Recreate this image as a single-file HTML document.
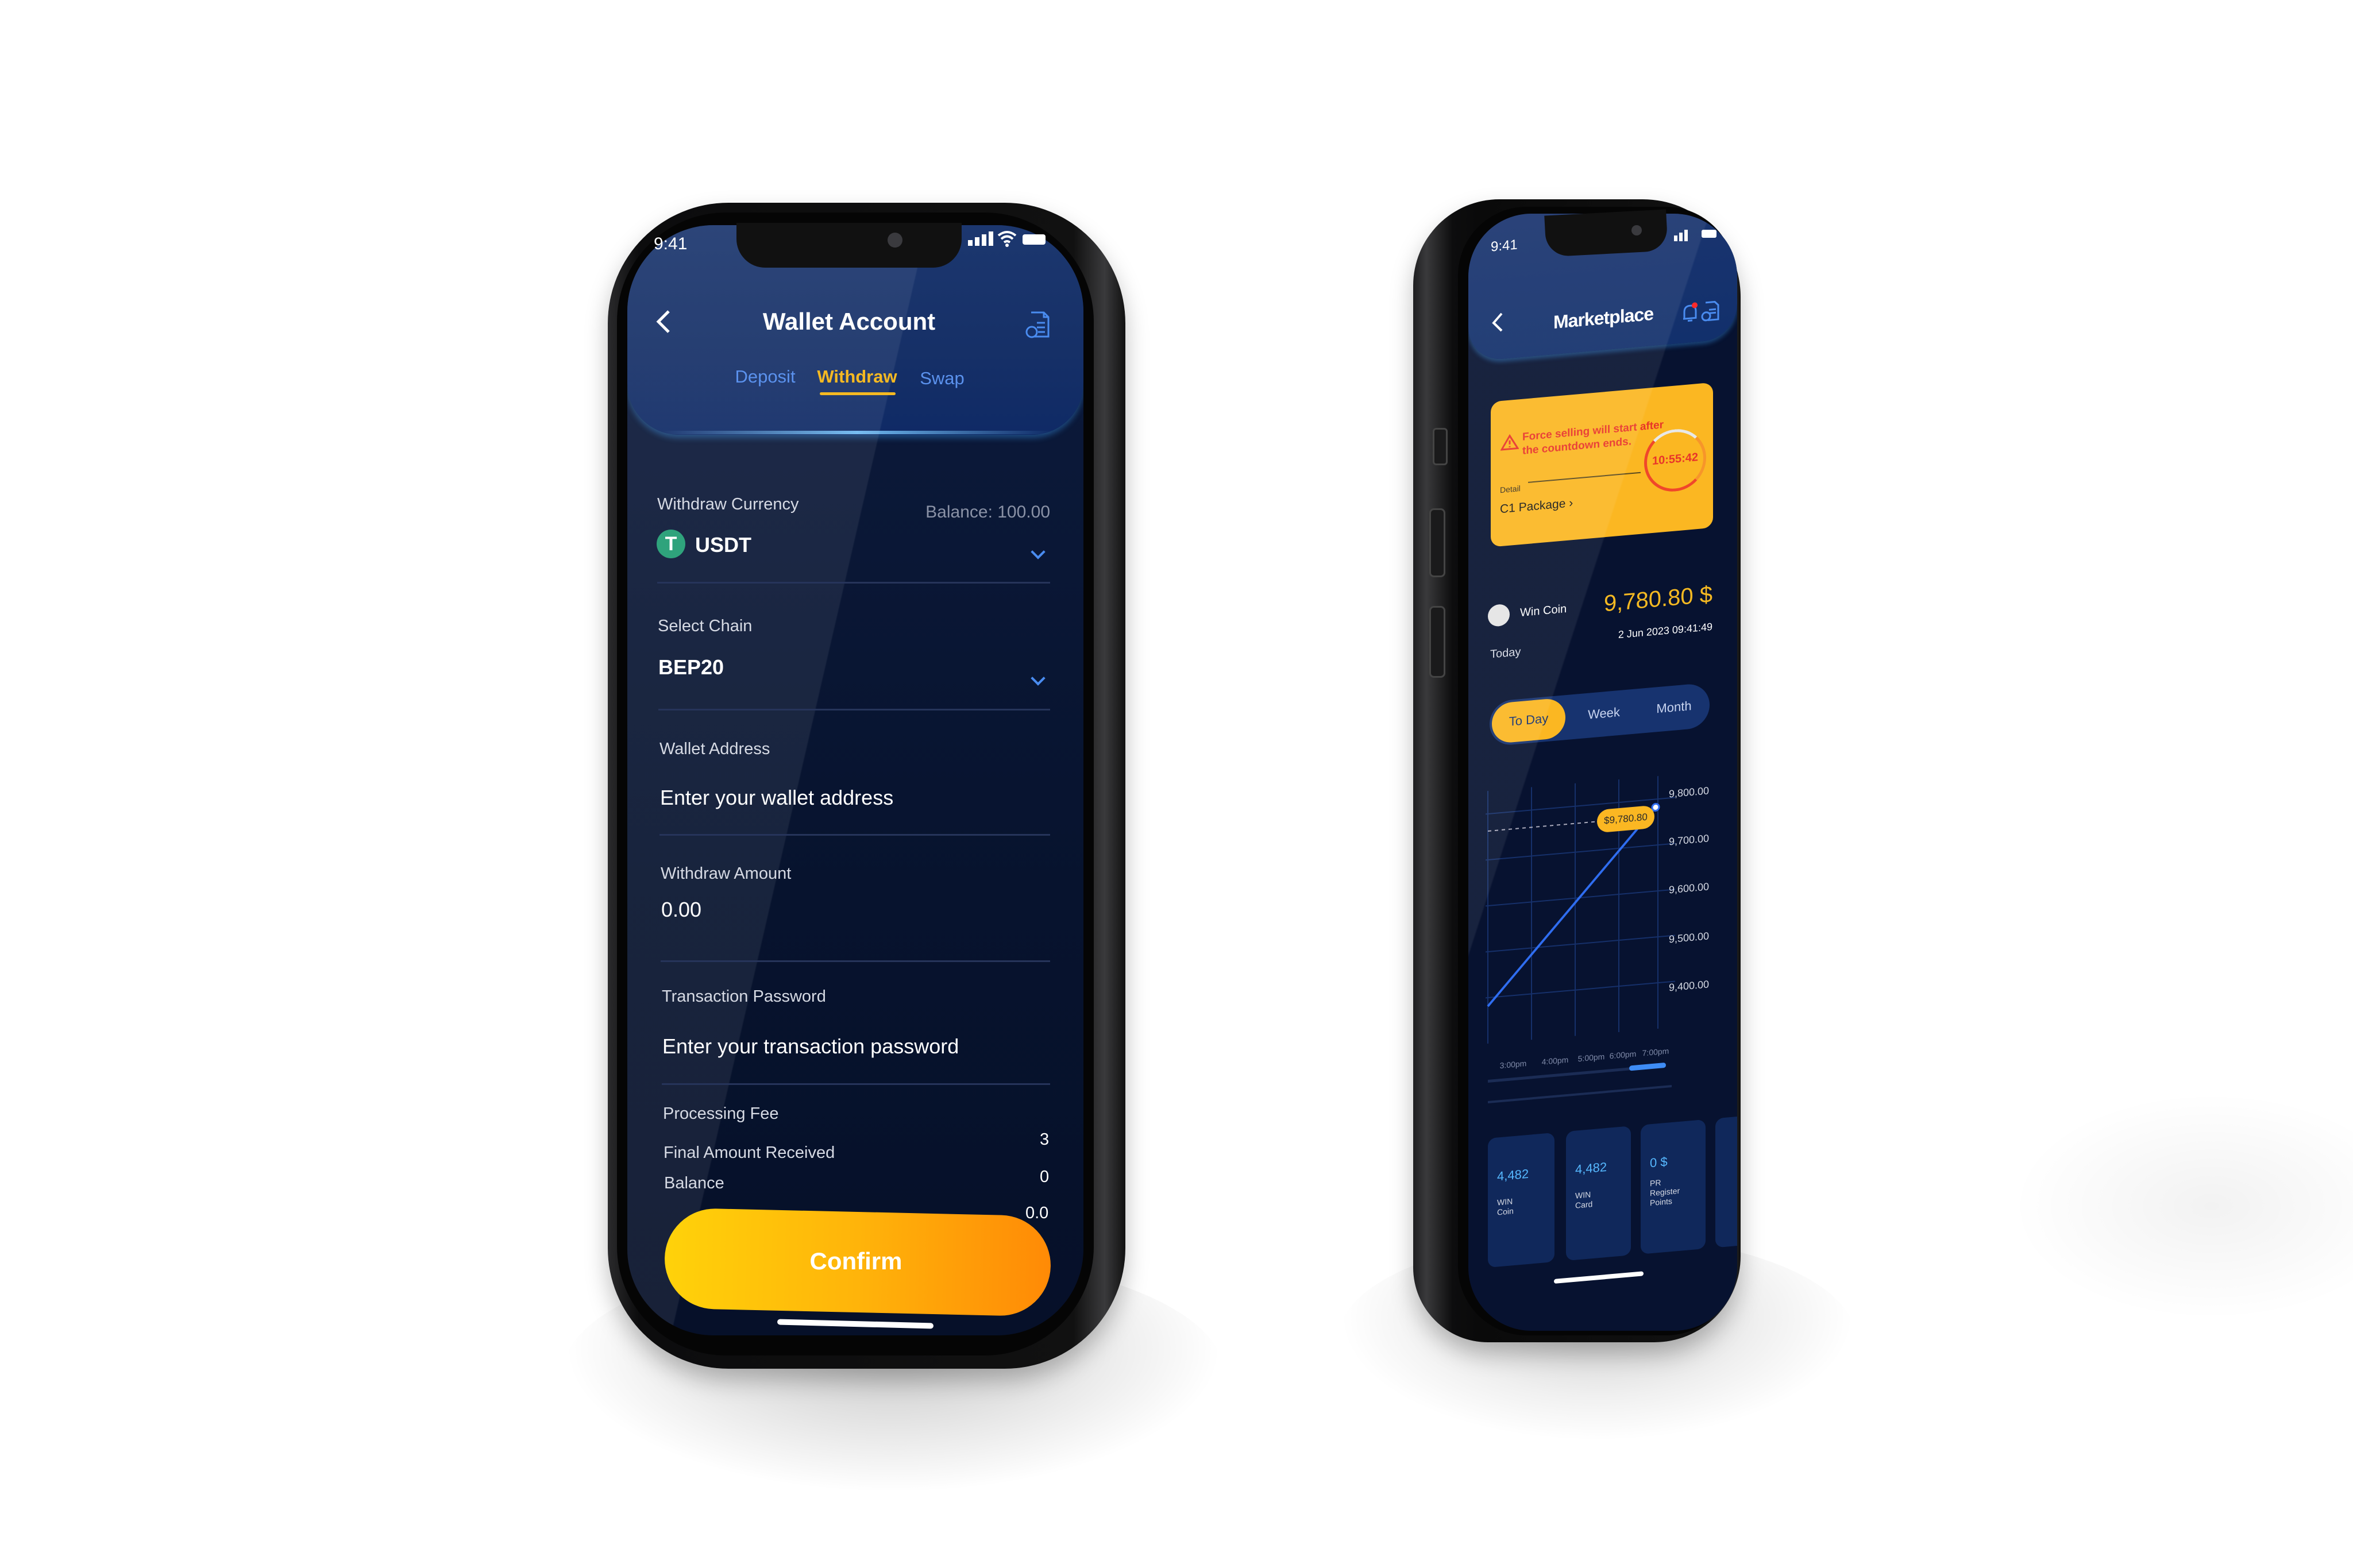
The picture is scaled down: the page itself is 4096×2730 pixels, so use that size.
<!DOCTYPE html>
<html><head><meta charset="utf-8">
<style>
*{margin:0;padding:0;box-sizing:border-box}
body{width:4096px;height:2730px;background:#fff;position:relative;overflow:hidden;font-family:"Liberation Sans",sans-serif}
.a{position:absolute}
.t{position:absolute;white-space:nowrap}
.lbl{color:#d6dae4;font-size:29px}
.val{color:#fff;font-size:36px}
.ln{position:absolute;height:3px;background:#26345a}
.chev{position:absolute;width:18px;height:18px;border-right:4px solid #4a8cf0;border-bottom:4px solid #4a8cf0;transform:rotate(45deg)}
</style></head><body>

<!-- shadows -->
<div class="a" style="left:980px;top:2180px;width:1150px;height:420px;border-radius:50%;background:radial-gradient(ellipse at 50% 40%,rgba(0,0,0,.22),rgba(0,0,0,.08) 45%,rgba(0,0,0,0) 70%)"></div>
<div class="a" style="left:2330px;top:2150px;width:900px;height:360px;border-radius:50%;background:radial-gradient(ellipse at 50% 40%,rgba(0,0,0,.2),rgba(0,0,0,.06) 45%,rgba(0,0,0,0) 70%)"></div>
<div class="a" style="left:3500px;top:1900px;width:700px;height:400px;border-radius:50%;background:radial-gradient(ellipse,rgba(0,0,0,.05),rgba(0,0,0,0) 70%)"></div>

<!-- LEFT PHONE -->
<div class="a" style="left:1058px;top:353px;width:901px;height:2030px;border-radius:210px;background:linear-gradient(90deg,#2a2a2c,#0c0c0d 6%,#111 90%,#3a3a3c 96%,#111);box-shadow:0 20px 40px rgba(0,0,0,.25)"></div>
<div class="a" style="left:1074px;top:370px;width:830px;height:1990px;border-radius:190px;background:#050505"></div>
<div class="a" style="left:1092px;top:392px;width:794px;height:1933px;border-radius:150px;overflow:hidden;background:linear-gradient(180deg,#0d1b3d,#07132e 60%,#061029)">
  <div class="a" style="left:0;top:0;width:794px;height:365px;border-radius:0 0 90px 90px;background:linear-gradient(180deg,#1c376f,#163067 60%,#0f2a66);box-shadow:0 6px 10px rgba(60,160,255,.35)"></div>
  <div class="a" style="left:60px;top:358px;width:680px;height:6px;background:linear-gradient(90deg,rgba(80,170,255,0),rgba(120,200,255,.9),rgba(80,170,255,0))"></div>
  <div class="a" style="left:0;top:0;width:794px;height:1933px;background:linear-gradient(103deg,rgba(255,255,255,.07) 0,rgba(255,255,255,.07) 42%,rgba(255,255,255,0) 42.2%)"></div>
</div>
<!-- notch -->
<div class="a" style="left:1282px;top:388px;width:392px;height:78px;border-radius:0 0 50px 50px;background:#111"></div>
<div class="a" style="left:1545px;top:405px;width:26px;height:26px;border-radius:50%;background:#3a3a3e"></div>
<div class="t" style="left:1138px;top:408px;color:#fff;font-size:30px">9:41</div>
<!-- status icons -->
<div class="a" style="left:1685px;top:418px;width:8px;height:10px;background:#fff"></div>
<div class="a" style="left:1697px;top:413px;width:8px;height:15px;background:#fff"></div>
<div class="a" style="left:1709px;top:408px;width:8px;height:20px;background:#fff"></div>
<div class="a" style="left:1721px;top:403px;width:8px;height:25px;background:#fff"></div>
<svg class="a" style="left:1735px;top:400px" width="36" height="30" viewBox="0 0 36 30"><path d="M3 10 Q18 -2 33 10 M8 16 Q18 7 28 16 M13 22 Q18 18 23 22" stroke="#fff" stroke-width="4" fill="none"/><circle cx="18" cy="27" r="3" fill="#fff"/></svg>
<div class="a" style="left:1780px;top:408px;width:40px;height:18px;border-radius:4px;background:#fff"></div>
<!-- header -->
<svg class="a" style="left:1140px;top:538px" width="30" height="44" viewBox="0 0 30 44"><path d="M24 4 L6 22 L24 40" stroke="#fff" stroke-width="5" fill="none"/></svg>
<div class="t" style="left:1478px;top:536px;transform:translateX(-50%);color:#fff;font-size:42px;font-weight:bold">Wallet Account</div>
<svg class="a" style="left:1783px;top:540px" width="46" height="52" viewBox="0 0 46 52"><path d="M12 4 H34 L42 12 V46 H16 M34 4 V12 H42 M22 22 H36 M22 30 H36 M24 38 H36" stroke="#4a8cf0" stroke-width="3" fill="none"/><circle cx="13" cy="38" r="9" stroke="#4a8cf0" stroke-width="3" fill="#163067"/></svg>
<div class="t" style="left:1332px;top:638px;transform:translateX(-50%);color:#5b92ee;font-size:31px">Deposit</div>
<div class="t" style="left:1492px;top:638px;transform:translateX(-50%);color:#f5b922;font-size:31px;font-weight:bold">Withdraw</div>
<div class="a" style="left:1427px;top:683px;width:132px;height:5px;background:#f5b922;border-radius:3px"></div>
<div class="t" style="left:1640px;top:641px;transform:translateX(-50%);color:#5b92ee;font-size:31px">Swap</div>
<!-- form -->
<div class="t lbl" style="left:1144px;top:862px">Withdraw Currency</div>
<div class="t" style="left:1828px;top:875px;transform:translateX(-100%);color:#8a92a6;font-size:30px">Balance: 100.00</div>
<div class="a" style="left:1143px;top:922px;width:50px;height:50px;border-radius:50%;background:#2fa37c;color:#fff;font-size:34px;font-weight:bold;text-align:center;line-height:50px">T</div>
<div class="t val" style="left:1210px;top:928px;font-weight:bold">USDT</div>
<div class="chev" style="left:1798px;top:952px"></div>
<div class="ln" style="left:1144px;top:1013px;width:684px"></div>
<div class="t lbl" style="left:1145px;top:1074px">Select Chain</div>
<div class="t val" style="left:1146px;top:1141px;font-weight:bold">BEP20</div>
<div class="chev" style="left:1798px;top:1172px"></div>
<div class="ln" style="left:1146px;top:1234px;width:682px"></div>
<div class="t lbl" style="left:1148px;top:1288px">Wallet Address</div>
<div class="t val" style="left:1149px;top:1368px">Enter your wallet address</div>
<div class="ln" style="left:1148px;top:1452px;width:680px"></div>
<div class="t lbl" style="left:1150px;top:1505px">Withdraw Amount</div>
<div class="t val" style="left:1151px;top:1563px">0.00</div>
<div class="ln" style="left:1150px;top:1672px;width:678px"></div>
<div class="t lbl" style="left:1152px;top:1719px">Transaction Password</div>
<div class="t val" style="left:1153px;top:1801px">Enter your transaction password</div>
<div class="ln" style="left:1152px;top:1886px;width:676px"></div>
<div class="t lbl" style="left:1154px;top:1923px">Processing Fee</div>
<div class="t lbl" style="left:1155px;top:1991px">Final Amount Received</div>
<div class="t lbl" style="left:1156px;top:2044px">Balance</div>
<div class="t lbl" style="left:1810px;top:1968px;color:#fff">3</div>
<div class="t lbl" style="left:1810px;top:2033px;color:#fff">0</div>
<div class="t lbl" style="left:1785px;top:2096px;color:#fff">0.0</div>
<div class="a" style="left:1157px;top:2110px;width:672px;height:175px;border-radius:90px;background:linear-gradient(90deg,#ffd20a,#ffb40a 50%,#ff8a06);transform:rotate(1.3deg)"></div>
<div class="t" style="left:1490px;top:2172px;transform:translateX(-50%);color:#fff;font-size:42px;font-weight:bold">Confirm</div>
<div class="a" style="left:1353px;top:2300px;width:272px;height:10px;border-radius:5px;background:#fff;transform:rotate(1.5deg)"></div>

<!-- RIGHT PHONE -->
<div class="a" style="left:2460px;top:347px;width:570px;height:1990px;border-radius:150px 170px 150px 130px;background:linear-gradient(90deg,#1e1e20,#3a3a3c 4%,#0d0d0e 12%,#0a0a0a 20%,#111 90%,#333 97%,#111);box-shadow:0 20px 40px rgba(0,0,0,.25)"></div>
<div class="a" style="left:2494px;top:745px;width:26px;height:65px;border-radius:6px;background:#1a1a1b;border:3px solid #444"></div>
<div class="a" style="left:2488px;top:885px;width:28px;height:120px;border-radius:8px;background:#1a1a1b;border:3px solid #444"></div>
<div class="a" style="left:2488px;top:1055px;width:28px;height:125px;border-radius:8px;background:#1a1a1b;border:3px solid #444"></div>
<div class="a" style="left:2538px;top:360px;width:482px;height:1965px;border-radius:120px;background:#050505"></div>
<div class="a" style="left:2556px;top:372px;width:468px;height:1945px;border-radius:110px;overflow:hidden;background:#071230">
 <div class="a" style="left:0;top:-372px;width:468px;height:2730px;transform:skewY(-5deg);transform-origin:0 0">
  <div class="a" style="left:0;top:300px;width:468px;height:330px;border-radius:0 0 60px 60px;background:linear-gradient(180deg,#1d3670,#12306c);box-shadow:0 5px 8px rgba(60,160,255,.35)"></div>
  <div class="t" style="left:39px;top:420px;color:#fff;font-size:24px">9:41</div>
  <svg class="a" style="left:40px;top:548px" width="22" height="36" viewBox="0 0 22 36"><path d="M18 3 L4 18 L18 33" stroke="#fff" stroke-width="4" fill="none"/></svg>
  <div class="t" style="left:235px;top:556px;transform:translateX(-50%);color:#fff;font-size:32px;font-weight:bold;letter-spacing:-1px">Marketplace</div>
  <svg class="a" style="left:370px;top:560px" width="32" height="38" viewBox="0 0 32 38"><path d="M6 28 V16 Q6 6 16 6 Q26 6 26 16 V28 H4 M12 32 H20" stroke="#4a8cf0" stroke-width="3" fill="none"/><circle cx="24" cy="6" r="5" fill="#ff2a2a"/></svg>
  <svg class="a" style="left:405px;top:560px" width="34" height="38" viewBox="0 0 34 38"><path d="M8 3 H24 L30 9 V34 H12 M14 16 H26 M14 22 H26" stroke="#4a8cf0" stroke-width="3" fill="none"/><circle cx="9" cy="27" r="7" stroke="#4a8cf0" stroke-width="3" fill="none"/></svg>
  <!-- card -->
  <div class="a" style="left:39px;top:703px;width:387px;height:253px;border-radius:18px;background:#fbb722"></div>
  <svg class="a" style="left:56px;top:762px" width="32" height="28" viewBox="0 0 32 28"><path d="M16 3 L30 26 H2 Z M16 11 V18 M16 21 V23" stroke="#e8352a" stroke-width="3" fill="none"/></svg>
  <div class="t" style="left:94px;top:758px;color:#e8352a;font-size:19px;line-height:24px;font-weight:bold">Force selling will start after<br>the countdown ends.</div>
  <div class="a" style="left:104px;top:848px;width:196px;height:2px;background:#5a4a20"></div>
  <div class="t" style="left:55px;top:850px;color:#3a3020;font-size:14px">Detail</div>
  <div class="t" style="left:55px;top:880px;color:#1a1a1a;font-size:21px">C1 Package ›</div>
  <div class="a" style="left:306px;top:779px;width:108px;height:108px;border-radius:50%;border:5px solid #f0472a;border-top-color:#e8e8e8;border-right-color:#f7952a"></div>
  <div class="t" style="left:360px;top:820px;transform:translateX(-50%);color:#e8352a;font-size:20px;font-weight:bold">10:55:42</div>
  <!-- coin -->
  <div class="a" style="left:34px;top:1057px;width:38px;height:38px;border-radius:50%;background:#e4e4e4"></div>
  <div class="t" style="left:90px;top:1064px;color:#fff;font-size:20px">Win Coin</div>
  <div class="t" style="left:38px;top:1132px;color:#d6dae4;font-size:20px">Today</div>
  <div class="t" style="left:425px;top:1050px;transform:translateX(-100%);color:#f5b922;font-size:40px">9,780.80 $</div>
  <div class="t" style="left:425px;top:1118px;transform:translateX(-100%);color:#fff;font-size:18px">2 Jun 2023 09:41:49</div>
  <!-- tabs -->
  <div class="a" style="left:37px;top:1225px;width:383px;height:78px;border-radius:39px;background:#17336f"></div>
  <div class="a" style="left:41px;top:1229px;width:128px;height:70px;border-radius:35px;background:#fbb722"></div>
  <div class="t" style="left:105px;top:1250px;transform:translateX(-50%);color:#17336f;font-size:22px">To Day</div>
  <div class="t" style="left:236px;top:1250px;transform:translateX(-50%);color:#c8d4f0;font-size:22px">Week</div>
  <div class="t" style="left:358px;top:1250px;transform:translateX(-50%);color:#c8d4f0;font-size:22px">Month</div>
  <!-- chart -->
  <svg class="a" style="left:30px;top:1380px" width="330" height="440" viewBox="0 0 330 440">
   <g stroke="#16306a" stroke-width="2"><path d="M4 0V440M80 0V440M156 0V440M232 0V440M300 0V440M0 40H330M0 120H330M0 200H330M0 280H330M0 360H330"/></g>
   <path d="M4 70 H210" stroke="#aab" stroke-width="2" stroke-dasharray="6 6"/>
   <path d="M4 375 L296 54" stroke="#2f6df0" stroke-width="4" fill="none"/>
   <circle cx="296" cy="54" r="6" fill="#fff" stroke="#2f6df0" stroke-width="3"/>
  </svg>
  <div class="a" style="left:224px;top:1430px;width:100px;height:40px;border-radius:20px;background:#fbb722;color:#2a2a2a;font-size:17px;text-align:center;line-height:40px">$9,780.80</div>
  <div class="t" style="left:384px;top:1403px;transform:translateX(-50%);color:#d6dae4;font-size:18px">9,800.00</div>
  <div class="t" style="left:384px;top:1486px;transform:translateX(-50%);color:#d6dae4;font-size:18px">9,700.00</div>
  <div class="t" style="left:384px;top:1570px;transform:translateX(-50%);color:#d6dae4;font-size:18px">9,600.00</div>
  <div class="t" style="left:384px;top:1656px;transform:translateX(-50%);color:#d6dae4;font-size:18px">9,500.00</div>
  <div class="t" style="left:384px;top:1740px;transform:translateX(-50%);color:#d6dae4;font-size:18px">9,400.00</div>
  <div class="t" style="left:78px;top:1852px;transform:translateX(-50%);color:#7f8aa8;font-size:14px">3:00pm</div>
  <div class="t" style="left:151px;top:1852px;transform:translateX(-50%);color:#7f8aa8;font-size:14px">4:00pm</div>
  <div class="t" style="left:214px;top:1852px;transform:translateX(-50%);color:#7f8aa8;font-size:14px">5:00pm</div>
  <div class="t" style="left:269px;top:1852px;transform:translateX(-50%);color:#7f8aa8;font-size:14px">6:00pm</div>
  <div class="t" style="left:326px;top:1852px;transform:translateX(-50%);color:#7f8aa8;font-size:14px">7:00pm</div>
  <div class="a" style="left:34px;top:1883px;width:310px;height:5px;background:#1b2c55"></div>
  <div class="a" style="left:280px;top:1880px;width:64px;height:9px;border-radius:5px;background:#3e8cf5"></div>
  <div class="a" style="left:34px;top:1920px;width:320px;height:4px;background:#1b2c55"></div>
  <!-- bottom cards -->
  <div class="a" style="left:34px;top:1985px;width:116px;height:225px;border-radius:14px;background:#10285b"></div>
  <div class="a" style="left:170px;top:1985px;width:113px;height:225px;border-radius:14px;background:#10285b"></div>
  <div class="a" style="left:300px;top:1985px;width:113px;height:225px;border-radius:14px;background:#10285b"></div>
  <div class="a" style="left:430px;top:1985px;width:60px;height:225px;border-radius:14px;background:#10285b"></div>
  <div class="t" style="left:50px;top:2040px;color:#56b8ff;font-size:22px">4,482</div>
  <div class="t" style="left:50px;top:2090px;color:#d6dae4;font-size:14px;line-height:17px">WIN<br>Coin</div>
  <div class="t" style="left:186px;top:2040px;color:#56b8ff;font-size:22px">4,482</div>
  <div class="t" style="left:186px;top:2090px;color:#d6dae4;font-size:14px;line-height:17px">WIN<br>Card</div>
  <div class="t" style="left:316px;top:2040px;color:#56b8ff;font-size:22px">0 $</div>
  <div class="t" style="left:316px;top:2080px;color:#d6dae4;font-size:14px;line-height:17px">PR<br>Register<br>Points</div>
  <div class="a" style="left:149px;top:2240px;width:156px;height:8px;border-radius:4px;background:#fff"></div>
 </div>
 <div class="a" style="left:0;top:0;width:468px;height:1945px;background:linear-gradient(108deg,rgba(255,255,255,.07) 0,rgba(255,255,255,.07) 38%,rgba(255,255,255,0) 38.3%)"></div>
</div>
<!-- right notch -->
<div class="a" style="left:2690px;top:370px;width:212px;height:72px;border-radius:0 0 40px 40px;background:#111;transform:rotate(-3deg)"></div>
<div class="a" style="left:2840px;top:392px;width:18px;height:18px;border-radius:50%;background:#3a3a3e"></div>
<div class="a" style="left:2914px;top:410px;width:6px;height:10px;background:#fff"></div>
<div class="a" style="left:2923px;top:405px;width:6px;height:15px;background:#fff"></div>
<div class="a" style="left:2932px;top:400px;width:6px;height:20px;background:#fff"></div>
<div class="a" style="left:2962px;top:400px;width:26px;height:14px;border-radius:3px;background:#fff"></div>

</body></html>
